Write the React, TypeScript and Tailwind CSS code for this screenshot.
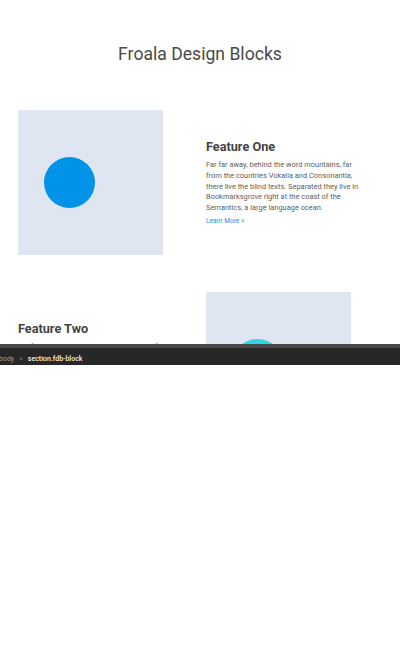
const para =
  "Far far away, behind the word mountains, far from the countries Vokalia and Consonantia, there live the blind texts. Separated they live in Bookmarksgrove right at the coast of the Semantics, a large language ocean.";

function Picture({ color }: { color: string }) {
  return (
    <div className="w-[145px] h-[145px] shrink-0 rounded-[1px] bg-[#dfe6f1] flex items-center">
      <div className={`ml-[26px] w-[51px] h-[51px] rounded-full ${color}`} />
    </div>
  );
}

function FeatureText({ title }: { title: string }) {
  return (
    <div className="w-[156px] shrink-0 text-[#444]">
      <h3 className="text-[12.7px] leading-[16px] font-bold">{title}</h3>
      <p className="mt-[5px] text-[7.45px] leading-[10.67px] text-[#606060]">{para}</p>
      <a className="block mt-[3px] text-[6.6px] leading-[9px] text-[#1a8fe3]">Learn More &gt;</a>
    </div>
  );
}

export default function App() {
  return (
    <div className="w-[400px] h-[658px] bg-white font-['Roboto',sans-serif]">
      <div className="h-[344px] overflow-hidden">
        <h1 className="pt-[43px] text-center text-[17.6px] leading-[22px] font-normal text-[#4a4a4a]">
          Froala Design Blocks
        </h1>
        <section className="mt-[45px] pl-[18px] flex items-center gap-[43px]">
          <Picture color="bg-[#0093e8]" />
          <FeatureText title="Feature One" />
        </section>
        <section className="mt-[37px] pl-[18px] flex items-center gap-[43px]">
          <div className="w-[145px] shrink-0">
            <FeatureText title="Feature Two" />
          </div>
          <Picture color="bg-[#2ed6df]" />
        </section>
      </div>
      <div className="h-[4px] bg-[#4a4a4a]" />
      <div className="h-[17px] bg-[#272727] flex items-center gap-[5px] -ml-[1px] pt-[5px] text-[7px] leading-none">
        <span className="text-[#9c9c9c]">body</span>
        <span className="text-[#777]">&gt;</span>
        <span className="text-[#f2f2f2] font-medium">section.fdb-block</span>
      </div>
    </div>
  );
}
